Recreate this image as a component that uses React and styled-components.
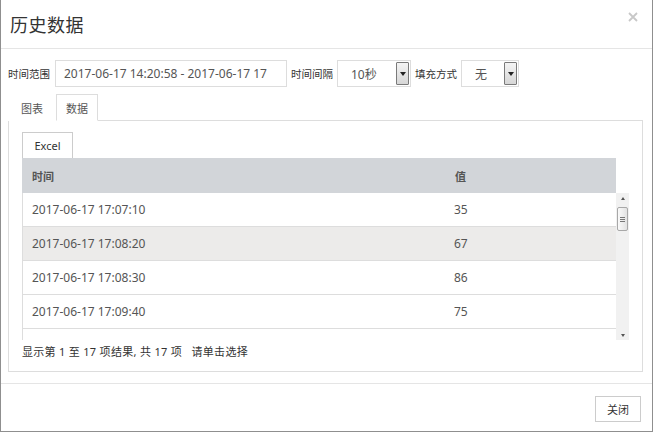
import React from 'react';
import styled, { createGlobalStyle } from 'styled-components';

const GlobalStyle = createGlobalStyle`
  body {
    margin: 0;
    background: #fff;
    font-family: "Noto Sans", "Noto Sans CJK SC", sans-serif;
    color: #555;
  }
`;

const Modal = styled.div`
  width: 651px;
  height: 431px;
  background: #fff;
  border: 1px solid #8f8f8f;
  border-top: none;
  display: flex;
  flex-direction: column;
`;

const Header = styled.div`
  height: 48px;
  border-bottom: 1px solid #e5e5e5;
  display: flex;
  align-items: center;
  justify-content: space-between;
  padding: 0 14px 0 9px;
`;

const Title = styled.h4`
  margin: 0;
  font-size: 18px;
  font-weight: normal;
  color: #333;
  letter-spacing: 0.5px;
`;

const CloseX = styled.button`
  border: none;
  background: none;
  padding: 0;
  margin-top: -14px;
  cursor: pointer;
  display: flex;
`;

const Body = styled.div`
  padding: 11px 9px 11px 7px;
`;

const FilterRow = styled.div`
  display: flex;
  align-items: center;
  gap: 4px;
  height: 27px;
`;

const Label = styled.span`
  font-size: 10.5px;
  color: #333;
  white-space: nowrap;
  margin-right: ${p => p.$mr || 0}px;
`;

const TextBox = styled.div`
  width: ${p => p.$w}px;
  height: 25px;
  border: 1px solid #ddd;
  box-sizing: content-box;
  display: flex;
  align-items: center;
  padding-left: ${p => p.$pl || 8}px;
  font-size: 12px;
  color: #555;
  white-space: nowrap;
  overflow: hidden;
  position: relative;
`;

const Arrow = styled.span`
  position: absolute;
  right: 1px;
  top: 1px;
  bottom: 1px;
  width: 11px;
  border: 1px solid #7a7a7a;
  border-radius: 1px;
  background: linear-gradient(#f4f4f4, #d6d6d6);
  display: flex;
  align-items: center;
  justify-content: center;
  &::after {
    content: '';
    border-left: 3px solid transparent;
    border-right: 3px solid transparent;
    border-top: 4px solid #222;
  }
`;

const TabBar = styled.div`
  display: flex;
  margin-top: 7px;
  margin-bottom: -1px;
  position: relative;
`;

const Tab = styled.div`
  height: 25px;
  padding: 0 ${p => (p.$active ? 9 : 12)}px;
  display: flex;
  align-items: center;
  font-size: 11px;
  color: #555;
  border: 1px solid ${p => (p.$active ? '#ddd' : 'transparent')};
  border-bottom-color: ${p => (p.$active ? '#fff' : 'transparent')};
  background: #fff;
`;

const Panel = styled.div`
  border: 1px solid #ddd;
  padding: 11px 13px 7px 13px;
`;

const ExcelButton = styled.div`
  width: 49px;
  height: 25px;
  border: 1px solid #ccc;
  border-bottom: none;
  display: flex;
  align-items: center;
  justify-content: center;
  font-size: 11px;
  color: #333;
`;

const HeadRow = styled.div`
  display: grid;
  grid-template-columns: 423px 1fr;
  height: 35px;
  align-items: center;
  background: #d2d5d9;
  margin-right: 13px;
`;

const HeadCell = styled.div`
  padding-left: 10px;
  font-size: 11px;
  font-weight: bold;
  color: #555;
`;

const ScrollArea = styled.div`
  display: flex;
  height: 147px;
`;

const Rows = styled.div`
  flex: 1;
  overflow: hidden;
  border-left: 1px solid #ddd;
`;

const Row = styled.div`
  display: grid;
  grid-template-columns: 422px 1fr;
  height: 33px;
  align-items: center;
  border-bottom: 1px solid #ddd;
  background: ${p => (p.$hover ? '#ecebea' : '#fff')};
`;

const Cell = styled.div`
  padding-left: 9px;
  font-size: 12px;
  color: #555;
`;

const ScrollBar = styled.div`
  width: 13px;
  background: #f1f1f1;
  display: flex;
  flex-direction: column;
  align-items: center;
`;

const ScrollArrow = styled.div`
  height: 10px;
  display: flex;
  align-items: center;
  justify-content: center;
  &::after {
    content: '';
    border-left: 2px solid transparent;
    border-right: 2px solid transparent;
    ${p => (p.$up ? 'border-bottom: 3px solid #555;' : 'border-top: 3px solid #555;')}
  }
`;

const Thumb = styled.div`
  width: 9px;
  height: 22px;
  margin-top: 4px;
  border: 1px solid #a8a8a8;
  border-radius: 2px;
  background: linear-gradient(90deg, #fafafa, #e2e2e2);
  display: flex;
  flex-direction: column;
  align-items: center;
  justify-content: center;
  gap: 1px;
  span {
    width: 5px;
    height: 1px;
    background: #777;
  }
`;

const Spacer = styled.div`
  flex: 1;
`;

const Info = styled.div`
  height: 24px;
  line-height: 24px;
  font-size: 11px;
  letter-spacing: 0.3px;
  color: #333;
  white-space: pre;
`;

const Footer = styled.div`
  border-top: 1px solid #e5e5e5;
  flex: 1;
  display: flex;
  justify-content: flex-end;
  align-items: flex-start;
  padding: 12px 11px 0 0;
`;

const Button = styled.button`
  width: 46px;
  height: 26px;
  border: 1px solid #ccc;
  background: #fff;
  font-family: inherit;
  font-size: 11px;
  color: #333;
  padding: 0;
`;

const rows = [
  ['2017-06-17 17:07:10', 35],
  ['2017-06-17 17:08:20', 67],
  ['2017-06-17 17:08:30', 86],
  ['2017-06-17 17:09:40', 75],
];

const App = () => (
  <>
    <GlobalStyle />
    <Modal>
      <Header>
        <Title>历史数据</Title>
        <CloseX aria-label="close">
          <svg width="10" height="10" viewBox="0 0 10 10">
            <path d="M1 1L9 9M9 1L1 9" stroke="#c8c8c8" strokeWidth="1.8" />
          </svg>
        </CloseX>
      </Header>
      <Body>
        <FilterRow>
          <Label $mr={1}>时间范围</Label>
          <TextBox $w={222}>2017-06-17 14:20:58 - 2017-06-17 17</TextBox>
          <Label>时间间隔</Label>
          <TextBox $w={59} $pl={13}>10秒<Arrow /></TextBox>
          <Label>填充方式</Label>
          <TextBox $w={43} $pl={13}>无<Arrow /></TextBox>
        </FilterRow>
        <TabBar>
          <Tab>图表</Tab>
          <Tab $active>数据</Tab>
        </TabBar>
        <Panel>
          <ExcelButton>Excel</ExcelButton>
          <HeadRow>
            <HeadCell>时间</HeadCell>
            <HeadCell>值</HeadCell>
          </HeadRow>
          <ScrollArea>
            <Rows>
              {rows.map(([t, v], i) => (
                <Row key={t} $hover={i === 1}>
                  <Cell>{t}</Cell>
                  <Cell>{v}</Cell>
                </Row>
              ))}
            </Rows>
            <ScrollBar>
              <ScrollArrow $up />
              <Thumb><span /><span /><span /></Thumb>
              <Spacer />
              <ScrollArrow />
            </ScrollBar>
          </ScrollArea>
          <Info>{'显示第 1 至 17 项结果, 共 17 项   请单击选择'}</Info>
        </Panel>
      </Body>
      <Footer>
        <Button>关闭</Button>
      </Footer>
    </Modal>
  </>
);

export default App;
